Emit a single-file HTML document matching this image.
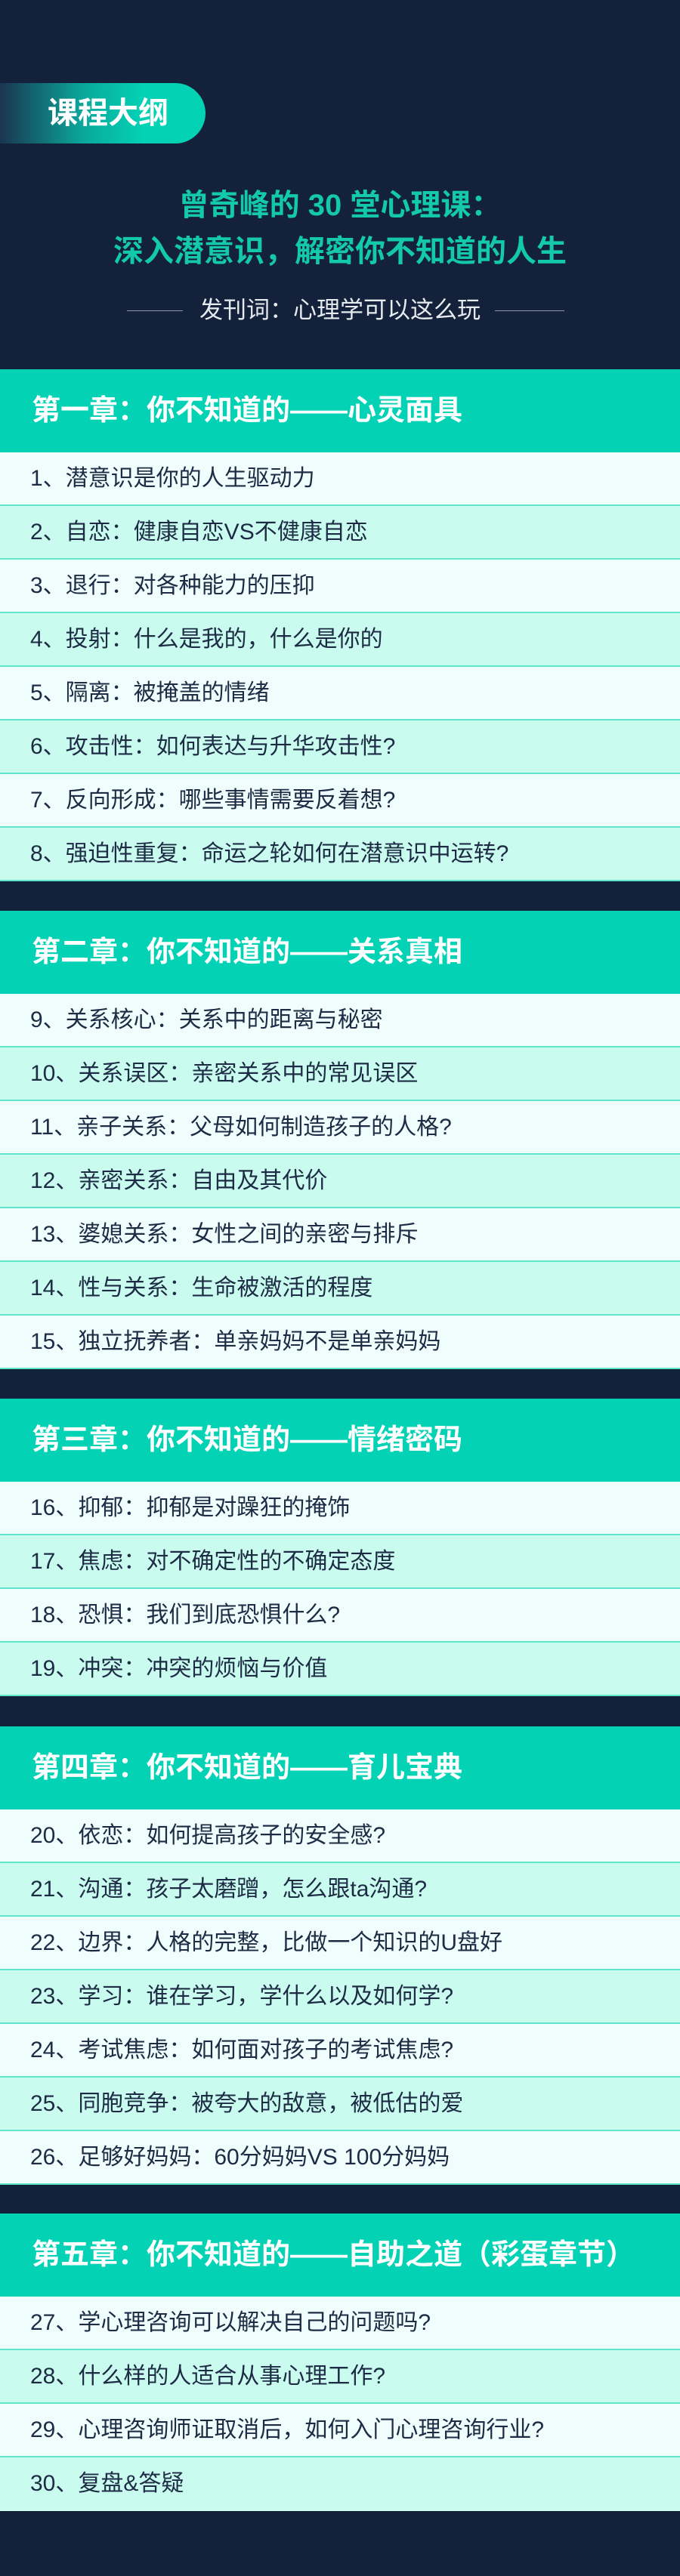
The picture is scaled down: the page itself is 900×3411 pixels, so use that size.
<!DOCTYPE html>
<html><head><meta charset="utf-8">
<style>
*{margin:0;padding:0;box-sizing:border-box}
body{width:900px;height:3411px;background:#14213a;font-family:"Liberation Sans","Noto Sans CJK SC",sans-serif;overflow:hidden;position:relative}
.pill{position:absolute;left:0;top:110px;width:272px;height:80px;border-radius:0 40px 40px 0;background:linear-gradient(90deg,#1a3550 0%,#0aa79a 40%,#03d2b5 70%)}
.pill span{position:absolute;left:63px;top:50%;transform:translateY(-50%);color:#fff;font-size:40px;font-weight:bold;line-height:1;white-space:nowrap}
.t{position:absolute;left:0;width:900px;text-align:center;color:#13c9a9;font-size:40px;font-weight:bold;line-height:1;white-space:nowrap}
.sub{position:absolute;top:393px;left:0;width:900px;text-align:center;color:#e6ebf0;font-size:31px;line-height:36px}
.ln{position:absolute;top:411px;height:1px;background:#8b96a6}
.ch{position:absolute;left:0;width:900px;height:110px;background:#03d2b5;color:#fff;font-size:38px;font-weight:bold;line-height:110px;padding-left:42px;white-space:nowrap}
.it{position:absolute;left:0;width:900px;height:71px;line-height:69px;padding-left:40px;font-size:30px;color:#1d2b45;border-bottom:2px solid #5fe6cd;white-space:nowrap}
.a{background:#effefc}
.b{background:#c9fcef}
</style></head><body>
<div class="pill"><span>课程大纲</span></div>
<div class="t" style="top:252px">曾奇峰的 30 堂心理课：</div>
<div class="t" style="top:313px">深入潜意识，解密你不知道的人生</div>
<div class="ln" style="left:168px;width:74px"></div>
<div class="ln" style="left:655px;width:92px"></div>
<div class="sub">发刊词：心理学可以这么玩</div>

<div class="ch" style="top:489px">第一章：你不知道的——心灵面具</div>
<div class="it a" style="top:599px">1、潜意识是你的人生驱动力</div>
<div class="it b" style="top:670px">2、自恋：健康自恋VS不健康自恋</div>
<div class="it a" style="top:741px">3、退行：对各种能力的压抑</div>
<div class="it b" style="top:812px">4、投射：什么是我的，什么是你的</div>
<div class="it a" style="top:883px">5、隔离：被掩盖的情绪</div>
<div class="it b" style="top:954px">6、攻击性：如何表达与升华攻击性?</div>
<div class="it a" style="top:1025px">7、反向形成：哪些事情需要反着想?</div>
<div class="it b" style="top:1096px">8、强迫性重复：命运之轮如何在潜意识中运转?</div>

<div class="ch" style="top:1206px">第二章：你不知道的——关系真相</div>
<div class="it a" style="top:1316px">9、关系核心：关系中的距离与秘密</div>
<div class="it b" style="top:1387px">10、关系误区：亲密关系中的常见误区</div>
<div class="it a" style="top:1458px">11、亲子关系：父母如何制造孩子的人格?</div>
<div class="it b" style="top:1529px">12、亲密关系：自由及其代价</div>
<div class="it a" style="top:1600px">13、婆媳关系：女性之间的亲密与排斥</div>
<div class="it b" style="top:1671px">14、性与关系：生命被激活的程度</div>
<div class="it a" style="top:1742px">15、独立抚养者：单亲妈妈不是单亲妈妈</div>

<div class="ch" style="top:1852px">第三章：你不知道的——情绪密码</div>
<div class="it a" style="top:1962px">16、抑郁：抑郁是对躁狂的掩饰</div>
<div class="it b" style="top:2033px">17、焦虑：对不确定性的不确定态度</div>
<div class="it a" style="top:2104px">18、恐惧：我们到底恐惧什么?</div>
<div class="it b" style="top:2175px">19、冲突：冲突的烦恼与价值</div>

<div class="ch" style="top:2286px">第四章：你不知道的——育儿宝典</div>
<div class="it a" style="top:2396px">20、依恋：如何提高孩子的安全感?</div>
<div class="it b" style="top:2467px">21、沟通：孩子太磨蹭，怎么跟ta沟通?</div>
<div class="it a" style="top:2538px">22、边界：人格的完整，比做一个知识的U盘好</div>
<div class="it b" style="top:2609px">23、学习：谁在学习，学什么以及如何学?</div>
<div class="it a" style="top:2680px">24、考试焦虑：如何面对孩子的考试焦虑?</div>
<div class="it b" style="top:2751px">25、同胞竞争：被夸大的敌意，被低估的爱</div>
<div class="it a" style="top:2822px">26、足够好妈妈：60分妈妈VS 100分妈妈</div>

<div class="ch" style="top:2931px">第五章：你不知道的——自助之道（彩蛋章节）</div>
<div class="it a" style="top:3041px">27、学心理咨询可以解决自己的问题吗?</div>
<div class="it b" style="top:3112px">28、什么样的人适合从事心理工作?</div>
<div class="it a" style="top:3183px">29、心理咨询师证取消后，如何入门心理咨询行业?</div>
<div class="it b" style="top:3254px;border-bottom:none">30、复盘&amp;答疑</div>
</body></html>
